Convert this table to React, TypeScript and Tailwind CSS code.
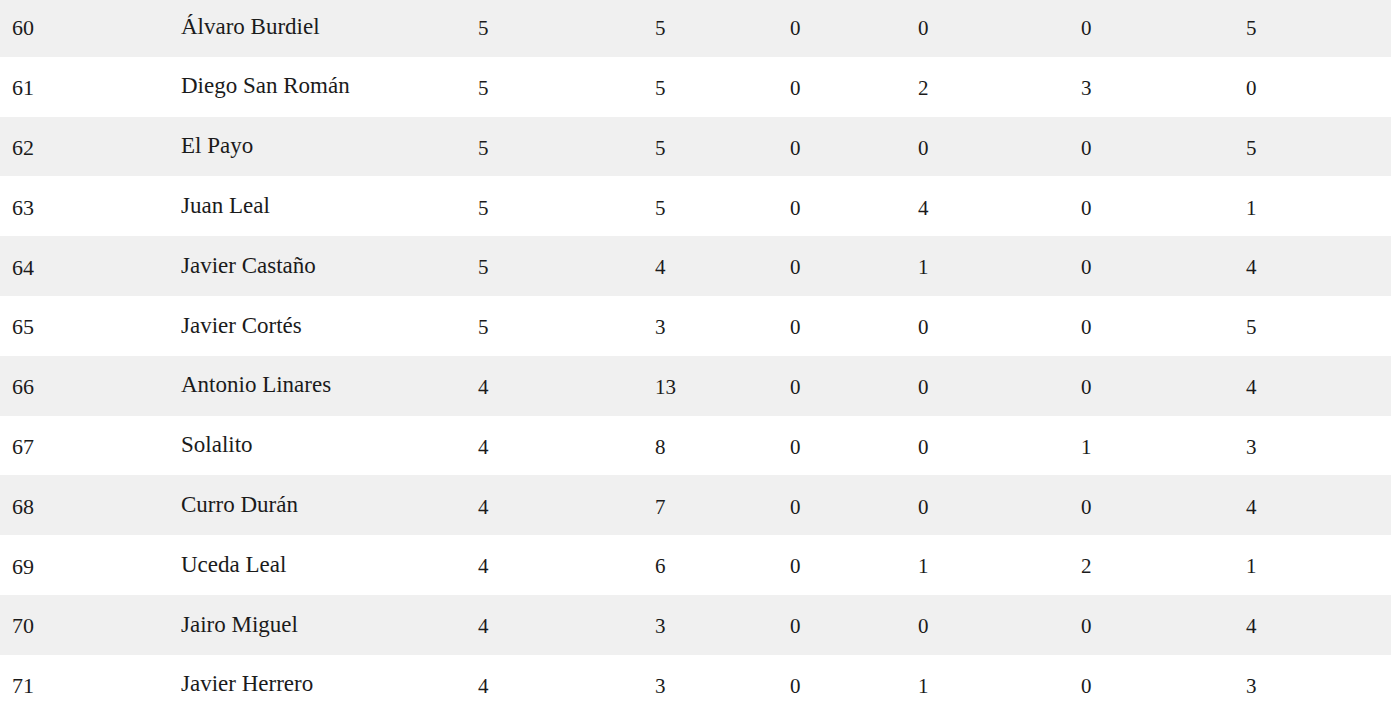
import React from 'react'

const rows: [string, string, number, number, number, number, number, number][] = [
    ['60', 'Álvaro Burdiel', 5, 5, 0, 0, 0, 5],
    ['61', 'Diego San Román', 5, 5, 0, 2, 3, 0],
    ['62', 'El Payo', 5, 5, 0, 0, 0, 5],
    ['63', 'Juan Leal', 5, 5, 0, 4, 0, 1],
    ['64', 'Javier Castaño', 5, 4, 0, 1, 0, 4],
    ['65', 'Javier Cortés', 5, 3, 0, 0, 0, 5],
    ['66', 'Antonio Linares', 4, 13, 0, 0, 0, 4],
    ['67', 'Solalito', 4, 8, 0, 0, 1, 3],
    ['68', 'Curro Durán', 4, 7, 0, 0, 0, 4],
    ['69', 'Uceda Leal', 4, 6, 0, 1, 2, 1],
    ['70', 'Jairo Miguel', 4, 3, 0, 0, 0, 4],
    ['71', 'Javier Herrero', 4, 3, 0, 1, 0, 3],
]

export default function App() {
    return (
        <div className="w-[1391px] h-[709px] overflow-hidden bg-white text-[#1b1b1b] font-['Liberation_Serif','Times_New_Roman',serif] text-[21px]">
            <div className="-mt-[3px]">
                {rows.map((r, i) => (
                    <div
                        key={r[0]}
                        className={`grid grid-cols-[169px_297px_177px_135px_128px_163px_165px_1fr] items-center h-[59.8px] ${i % 2 === 0 ? 'bg-[#f0f0f0]' : 'bg-white'}`}
                    >
                        <div className="pl-3 text-[22px] pt-0.5">{r[0]}</div>
                        <div className="pl-3 text-[23px]">{r[1]}</div>
                        {r.slice(2).map((v, j) => (
                            <div key={j} className="pl-3 pt-1">{v}</div>
                        ))}
                    </div>
                ))}
            </div>
        </div>
    )
}
